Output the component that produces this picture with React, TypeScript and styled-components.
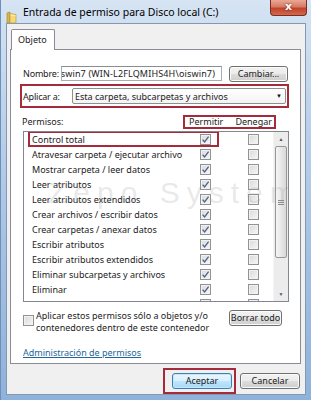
import styled, { createGlobalStyle } from "styled-components";

const GlobalStyle = createGlobalStyle`
  html, body {
    margin: 0;
    padding: 0;
    width: 311px;
    height: 400px;
    overflow: hidden;
    background: #a9c4e2;
  }
  * { box-sizing: border-box; }
`;

const permisos: { name: string; allow: boolean }[] = [
  { name: "Control total", allow: true },
  { name: "Atravesar carpeta / ejecutar archivo", allow: true },
  { name: "Mostrar carpeta / leer datos", allow: true },
  { name: "Leer atributos", allow: true },
  { name: "Leer atributos extendidos", allow: true },
  { name: "Crear archivos / escribir datos", allow: true },
  { name: "Crear carpetas / anexar datos", allow: true },
  { name: "Escribir atributos", allow: true },
  { name: "Escribir atributos extendidos", allow: true },
  { name: "Eliminar subcarpetas y archivos", allow: true },
  { name: "Eliminar", allow: true },
  { name: "Permisos de lectura", allow: true },
  { name: "Cambiar permisos", allow: true },
  { name: "Tomar posesión", allow: true },
];

const FolderIcon = () => (
  <svg width="11" height="13" viewBox="0 0 11 13">
    <path d="M1 2 L4 1 L4 12 L1 12 Z" fill="#d9b54a" stroke="#a8832a" strokeWidth="0.6" />
    <path d="M4 2.5 L10 3.5 L10 12 L4 12 Z" fill="#f3d978" stroke="#b8913a" strokeWidth="0.6" />
    <path d="M4.5 4 L9.5 4.8" stroke="#fff3c0" strokeWidth="0.8" />
  </svg>
);

const CheckMark = () => (
  <svg width="9" height="9" viewBox="0 0 9 9">
    <path d="M1.6 4.6 L3.6 7 L7.6 1.6" fill="none" stroke="#4f6186" strokeWidth="1.3" />
  </svg>
);

const Check = ({ checked }: { checked?: boolean }) => (
  <CheckBox>{checked && <CheckMark />}</CheckBox>
);

const App = () => {
  return (
    <>
      <GlobalStyle />
      <Window>
        <TitleBar>
          <IconSlot>
            <FolderIcon />
          </IconSlot>
          <Title>Entrada de permiso para Disco local (C:)</Title>
          <CloseButton>x</CloseButton>
        </TitleBar>
        <Client>
          <TabStrip>
            <Tab>Objeto</Tab>
          </TabStrip>
          <Panel>
            <NameRow>
              <FieldLabel $width={38}>Nombre:</FieldLabel>
              <TextField>
                <span>oiswin7 (WIN-L2FLQMIHS4H\oiswin7)</span>
              </TextField>
              <Button $width={59}>Cambiar...</Button>
            </NameRow>
            <ApplyBox>
              <FieldLabel $width={49}>Aplicar a:</FieldLabel>
              <Select>
                <span>Esta carpeta, subcarpetas y archivos</span>
                <Arrow>▼</Arrow>
              </Select>
            </ApplyBox>
            <HeaderRow>
              <PermLabel>Permisos:</PermLabel>
              <HeaderBox>
                <span>Permitir</span>
                <span>Denegar</span>
              </HeaderBox>
            </HeaderRow>
            <ListBox>
              <Rows>
                {permisos.map((p, i) => (
                  <PermRow key={p.name}>
                    {i === 0 && <RowMark />}
                    <PermName>{p.name}</PermName>
                    <Check checked={p.allow} />
                    <Check />
                  </PermRow>
                ))}
              </Rows>
              <ScrollBar>
                <ScrollArrow>▲</ScrollArrow>
                <Track>
                  <Thumb>
                    <Grip />
                  </Thumb>
                </Track>
                <ScrollArrow>▼</ScrollArrow>
              </ScrollBar>
              <Watermark>Zepo System</Watermark>
            </ListBox>
            <OptionRow>
              <OptionCheck>
                <Check />
              </OptionCheck>
              <OptionText>
                Aplicar estos permisos sólo a objetos y/o
                <br />
                contenedores dentro de este contenedor
              </OptionText>
              <Button $width={53}>Borrar todo</Button>
            </OptionRow>
            <Link>Administración de permisos</Link>
          </Panel>
          <Footer>
            <DefaultBox>
              <Button $width={60} $default>
                Aceptar
              </Button>
            </DefaultBox>
            <Button $width={60}>Cancelar</Button>
          </Footer>
        </Client>
      </Window>
    </>
  );
};

const Window = styled.div`
  width: 311px;
  height: 400px;
  display: flex;
  flex-direction: column;
  padding: 0 5px 5px 5px;
  background: linear-gradient(180deg, #d6e4f3 0%, #bfd4ec 25%, #a6c2e3 60%, #8fb2da 100%);
  border-left: 1px solid #6d8fb8;
  font-family: "Noto Sans", "Open Sans", sans-serif;
  color: #222;
`;

const TitleBar = styled.div`
  height: 23px;
  display: flex;
  align-items: flex-start;
`;

const IconSlot = styled.div`
  margin-top: 7px;
  width: 11px;
  height: 13px;
`;

const Title = styled.div`
  margin-left: 6px;
  font-size: 10.5px;
  line-height: 24px;
  color: #000;
`;

const CloseButton = styled.div`
  margin-left: auto;
  margin-right: -1px;
  width: 37px;
  height: 16px;
  border: 1px solid #7a2e22;
  border-top: none;
  border-radius: 0 0 4px 4px;
  background: linear-gradient(180deg, #e9a897 0%, #d87a63 45%, #c0432b 55%, #d2694d 100%);
  color: #fff;
  font-family: "DejaVu Sans", sans-serif;
  font-weight: bold;
  font-size: 11px;
  line-height: 14px;
  text-align: center;
  text-shadow: 0 0 2px #5a1a10;
`;

const Client = styled.div`
  flex: 1;
  display: flex;
  flex-direction: column;
  background: #f0f0f0;
  border: 1px solid #8399b3;
  padding: 5px 4px 0 3px;
`;

const TabStrip = styled.div`
  display: flex;
  padding-left: 1px;
`;

const Tab = styled.div`
  height: 21px;
  margin-bottom: -1px;
  padding: 0 7px 0 6px;
  background: #fff;
  border: 1px solid #898c95;
  border-bottom: none;
  border-radius: 2px 2px 0 0;
  font-size: 9px;
  line-height: 19px;
  position: relative;
  z-index: 1;
`;

const Panel = styled.div`
  height: 315px;
  background: #fff;
  border: 1px solid #898c95;
  padding: 16px 12px 0 12px;
  display: flex;
  flex-direction: column;
  font-size: 9px;
`;

const NameRow = styled.div`
  display: flex;
  align-items: center;
  height: 15px;
`;

const FieldLabel = styled.span<{ $width: number }>`
  width: ${(p) => p.$width}px;
  flex: none;
  white-space: nowrap;
  letter-spacing: -0.2px;
`;

const TextField = styled.div`
  width: 161px;
  height: 15px;
  border: 1px solid #abadb3;
  border-top-color: #8a8d94;
  display: flex;
  justify-content: flex-end;
  overflow: hidden;
  padding-right: 6px;
  margin-right: 7px;
  line-height: 13px;
  white-space: nowrap;
  letter-spacing: 0.15px;
  span { flex: none; }
`;

const Button = styled.div<{ $width: number; $default?: boolean }>`
  width: ${(p) => p.$width}px;
  height: 16px;
  flex: none;
  border: 1px solid ${(p) => (p.$default ? "#3c7fb1" : "#707070")};
  border-radius: 3px;
  background: ${(p) =>
    p.$default
      ? "linear-gradient(180deg, #eaf6fd 0%, #d9f0fc 50%, #bee6fd 50%, #a7d9f5 100%)"
      : "linear-gradient(180deg, #f2f2f2 0%, #ebebeb 50%, #dddddd 50%, #cfcfcf 100%)"};
  box-shadow: inset 0 0 0 1px ${(p) => (p.$default ? "#c5e7fb" : "#fbfbfb")};
  text-align: center;
  line-height: 14px;
  white-space: nowrap;
`;

const ApplyBox = styled.div`
  margin: 3px -1px 0 -3px;
  height: 24px;
  border: 2px solid #a52a3a;
  padding: 2px 1px 2px 1px;
  display: flex;
  align-items: center;
`;

const Select = styled.div`
  flex: 1;
  height: 16px;
  border: 1px solid #8e8f8f;
  border-radius: 2px;
  background: linear-gradient(180deg, #ffffff 0%, #f4f4f4 100%);
  display: flex;
  align-items: center;
  padding: 0 3px 0 2px;
  white-space: nowrap;
`;

const Arrow = styled.span`
  margin-left: auto;
  font-size: 6px;
  color: #111;
`;

const HeaderRow = styled.div`
  margin-top: 7px;
  display: flex;
  align-items: center;
  height: 13px;
`;

const PermLabel = styled.span`
  margin-left: -1px;
`;

const HeaderBox = styled.div`
  margin-left: auto;
  margin-right: 12px;
  width: 93px;
  height: 14px;
  border: 2px solid #a52a3a;
  display: flex;
  justify-content: space-between;
  align-items: center;
  padding: 0 2px 0 4px;
  line-height: 10px;
`;

const ListBox = styled.div`
  margin-top: 3px;
  width: 266px;
  height: 171px;
  border: 1px solid #828790;
  display: flex;
  overflow: hidden;
  position: relative;
`;

const Rows = styled.div`
  flex: 1;
  overflow: hidden;
`;

const PermRow = styled.div`
  position: relative;
  height: 15px;
  display: grid;
  grid-template-columns: 168px 48px 11px;
  align-items: center;
  padding-left: 8px;
`;

const RowMark = styled.div`
  position: absolute;
  left: 4px;
  top: -1px;
  width: 191px;
  height: 16px;
  border: 2px solid #a52a3a;
`;

const PermName = styled.span`
  white-space: nowrap;
`;

const CheckBox = styled.span`
  width: 11px;
  height: 11px;
  border: 1px solid #929292;
  background: linear-gradient(135deg, #d9d9d9 0%, #f7f7f7 100%);
  box-shadow: inset 0 0 0 1px #f2f2f2;
  display: flex;
  align-items: center;
  justify-content: center;
`;

const ScrollBar = styled.div`
  width: 15px;
  flex: none;
  display: flex;
  flex-direction: column;
  background: #ececec;
  border-left: 1px solid #f4f4f4;
`;

const ScrollArrow = styled.div`
  height: 14px;
  font-size: 5px;
  color: #555;
  display: flex;
  align-items: center;
  justify-content: center;
`;

const Track = styled.div`
  flex: 1;
  padding: 0 1px;
  display: flex;
  flex-direction: column;
`;

const Thumb = styled.div`
  height: 112px;
  border: 1px solid #979797;
  border-radius: 2px;
  background: linear-gradient(90deg, #f5f5f5 0%, #e6e6e6 55%, #d8d8d8 100%);
  display: flex;
  align-items: center;
  justify-content: center;
`;

const Grip = styled.div`
  width: 6px;
  height: 5px;
  border-top: 1px solid #8a8a8a;
  border-bottom: 1px solid #8a8a8a;
  background: linear-gradient(180deg, transparent 40%, #8a8a8a 40%, #8a8a8a 60%, transparent 60%);
`;

const Watermark = styled.div`
  position: absolute;
  left: 24px;
  top: 44px;
  font-family: "Liberation Sans", sans-serif;
  font-size: 30px;
  letter-spacing: 7px;
  color: rgba(140, 140, 140, 0.2);
  pointer-events: none;
  white-space: nowrap;
`;

const OptionRow = styled.div`
  margin-top: 8px;
  display: flex;
  align-items: flex-start;
`;

const OptionCheck = styled.div`
  margin-top: 5px;
`;

const OptionText = styled.div`
  margin-left: 2px;
  margin-right: 2px;
  width: 191px;
  flex: none;
  line-height: 12px;
  white-space: nowrap;
`;

const Link = styled.div`
  margin-top: 13px;
  color: #23679a;
  text-decoration: underline;
  line-height: 12px;
`;

const Footer = styled.div`
  margin-top: 4px;
  display: flex;
  align-items: center;
  justify-content: flex-end;
  gap: 4px;
  padding-right: 1px;
  font-size: 9px;
`;

const DefaultBox = styled.div`
  border: 2px solid #a52a3a;
  padding: 3px 2px 3px 7px;
`;

export default App;
